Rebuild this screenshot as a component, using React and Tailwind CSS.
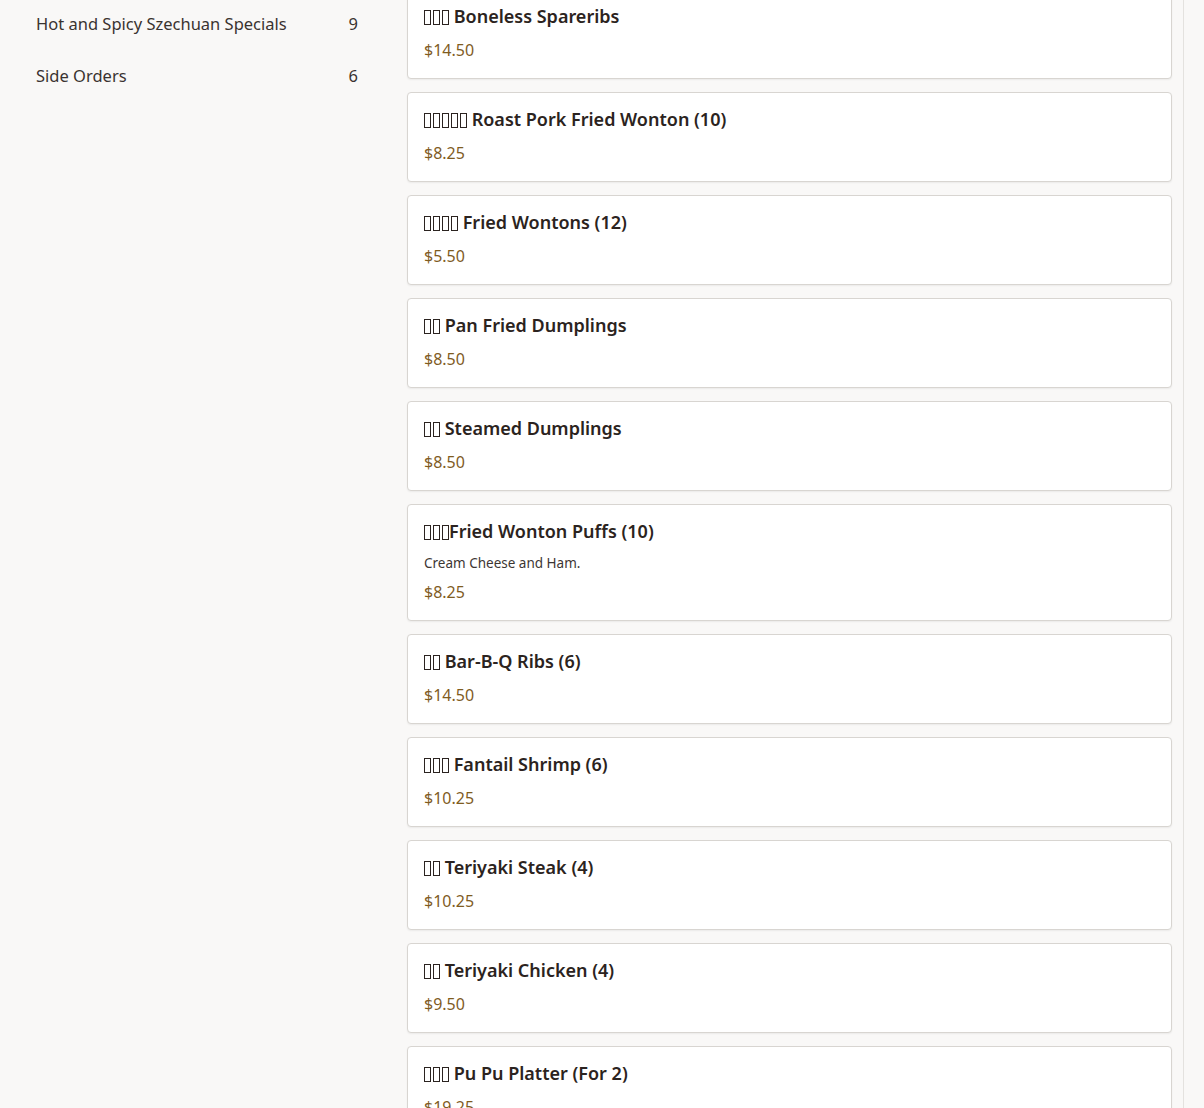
import React from 'react';

const categories = [
  { name: 'Hot and Spicy Szechuan Specials', count: 9 },
  { name: 'Side Orders', count: 6 },
];

const items = [
  { boxes: 3, name: 'Boneless Spareribs', price: '$14.50' },
  { boxes: 5, name: 'Roast Pork Fried Wonton (10)', price: '$8.25' },
  { boxes: 4, name: 'Fried Wontons (12)', price: '$5.50' },
  { boxes: 2, name: 'Pan Fried Dumplings', price: '$8.50' },
  { boxes: 2, name: 'Steamed Dumplings', price: '$8.50' },
  { boxes: 3, name: 'Fried Wonton Puffs (10)', price: '$8.25', desc: 'Cream Cheese and Ham.', tight: true },
  { boxes: 2, name: 'Bar-B-Q Ribs (6)', price: '$14.50' },
  { boxes: 3, name: 'Fantail Shrimp (6)', price: '$10.25' },
  { boxes: 2, name: 'Teriyaki Steak (4)', price: '$10.25' },
  { boxes: 2, name: 'Teriyaki Chicken (4)', price: '$9.50' },
  { boxes: 3, name: 'Pu Pu Platter (For 2)', price: '$19.25' },
];

// missing-glyph boxes, as the original font rendered the Chinese names
const Tofu = ({ n }) => (
  <span className="inline-flex gap-[2px] align-[-2px]" aria-hidden="true">
    {Array.from({ length: n }).map((_, i) => (
      <span key={i} className="inline-block w-[7px] h-[15px] border border-[#2b2320]" />
    ))}
  </span>
);

const MenuCard = ({ item }) => (
  <div className="bg-white border border-[#d8d5d1] rounded-[4px] shadow-[0_1px_2px_rgba(0,0,0,0.06)] px-4 pt-[14px] pb-[17px]">
    <h3 className="text-[18px] leading-[24px] font-semibold text-[#2b2320]">
      <Tofu n={item.boxes} />
      {item.tight ? '' : ' '}
      {item.name}
    </h3>
    {item.desc && (
      <p className="mt-[10px] text-[13.5px] leading-[20px] text-[#3d3633]">{item.desc}</p>
    )}
    <p className={`${item.desc ? 'mt-[8px]' : 'mt-[11px]'} text-[16px] leading-[22px] text-[#7f5c1f]`}>
      {item.price}
    </p>
  </div>
);

export default function App() {
  return (
    <div
      className="h-[1108px] overflow-hidden bg-[#f9f8f7] flex"
      style={{ fontFamily: '"Noto Sans", Lato, sans-serif' }}
    >
      <aside className="w-[407px] shrink-0 pl-9 pr-[49px] pt-[12px]">
        <ul className="flex flex-col gap-[28px]">
          {categories.map((c) => (
            <li key={c.name} className="flex justify-between items-center text-[16.5px] leading-[24px] text-[#3a3330]">
              <span>{c.name}</span>
              <span>{c.count}</span>
            </li>
          ))}
        </ul>
      </aside>
      <main className="w-[765px] shrink-0 -mt-[11px] flex flex-col gap-[13px]">
        {items.map((item) => (
          <MenuCard key={item.name} item={item} />
        ))}
      </main>
      <div className="ml-[11px] flex-1 border-l border-[#e4e2df] bg-[#f9f8f7]" />
    </div>
  );
}
